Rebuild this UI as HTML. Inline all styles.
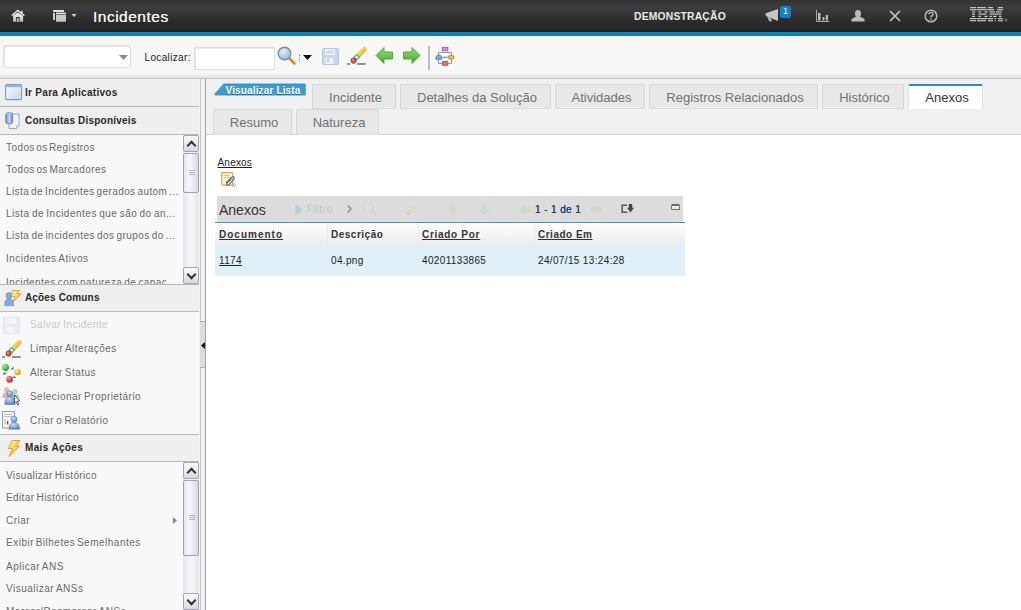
<!DOCTYPE html>
<html><head><meta charset="utf-8">
<style>
*{box-sizing:border-box;margin:0;padding:0}
html,body{width:1021px;height:610px;overflow:hidden;background:#fff;font-family:"Liberation Sans",sans-serif;position:relative}
.abs{position:absolute}
svg{position:absolute;overflow:visible}
#hdr{left:0;top:0;width:1021px;height:32px;background:linear-gradient(#333 0,#3d3d3d 8px,#2d2d2d 20px,#252525 30px,#1c1c1c 32px)}
#blue{left:0;top:32px;width:1021px;height:4px;background:linear-gradient(#0b8cc0,#0a7eae)}
#tb{left:0;top:36px;width:1021px;height:42px;background:linear-gradient(#f7f7f7 0,#f7f7f7 37px,#e2e2e2 42px)}
.t{position:absolute;white-space:nowrap}
#left{left:0;top:78px;width:200px;height:532px;background:#f7f7f7;overflow:hidden}
.sh{position:absolute;left:0;width:200px;background:#efefef;border-top:1px solid #b8b8b8;font-weight:bold;font-size:10px;color:#282828}
.li{position:absolute;left:6px;font-size:10px;color:#686868;white-space:nowrap;letter-spacing:0.5px;word-spacing:-1px;margin-top:-1px}
.ai{position:absolute;left:30px;font-size:10px;color:#686868;white-space:nowrap;letter-spacing:0.45px;word-spacing:-1px;margin-top:-1px}
#main{left:205px;top:78px;width:816px;height:532px;background:#fff;border-left:1px solid #a2a2a2}
.tab{position:absolute;height:25px;background:#e8e8e8;border:1px solid #d6d6d6;border-bottom:1px solid #dcdcdc;border-radius:2px 2px 0 0;font-size:13px;color:#727272;text-align:center;line-height:25px;white-space:nowrap;padding-left:3px}
.sb{position:absolute;width:16px;background:linear-gradient(90deg,#e4e4ec,#f6f6fa 50%,#e4e4ec)}
.sbb{position:absolute;left:0;width:16px;height:17px;border:1px solid #a4a4b4;border-radius:2px;background:linear-gradient(#fafafc,#d8d8e4)}
.up::after,.dn::after{content:'';position:absolute;left:3.5px;width:5px;height:5px;border-left:2px solid #333;border-top:2px solid #333}
.up::after{top:5.5px;transform:rotate(45deg)}
.dn::after{top:2.5px;transform:rotate(-135deg)}
.th{position:absolute;font-size:10px;font-weight:bold;color:#333;white-space:nowrap;letter-spacing:0.5px;margin-top:1px}
.td{position:absolute;font-size:10px;color:#222;white-space:nowrap;letter-spacing:0.35px;margin-top:1px}
</style></head><body>
<!-- HEADER -->
<div id="hdr" class="abs">
  <div class="abs" style="left:378px;top:0;width:267px;height:1px;background:#27353e"></div>
  <svg style="left:11px;top:9px" width="15" height="14" viewBox="0 0 15 14">
    <defs><linearGradient id="hg" x1="0" y1="0" x2="0" y2="1"><stop offset="0" stop-color="#f4f4f4"/><stop offset="1" stop-color="#b8b8b8"/></linearGradient></defs>
    <rect x="9.9" y="1.8" width="1.8" height="3" fill="#d8d8d8"/>
    <path d="M0.9 6.6 L6.8 1.4 L13.3 6.6" stroke="#e4e4e4" stroke-width="1.4" fill="none"/>
    <path d="M2.1 6.8 L6.8 3.6 L12.1 6.8 L12.1 12.7 L2.1 12.7 Z" fill="url(#hg)"/>
    <rect x="5.2" y="8.1" width="3.4" height="4.6" fill="#222"/>
    <rect x="6" y="9.3" width="1.8" height="3.4" fill="#c8c8c8"/>
  </svg>
  <svg style="left:53px;top:10px" width="26" height="13" viewBox="0 0 26 13">
    <rect x="0" y="0" width="11" height="2" fill="#dedede"/>
    <rect x="0" y="3" width="2" height="7" fill="#d0d0d0"/>
    <rect x="3" y="2.6" width="10" height="1.8" fill="#e0e0e0"/>
    <rect x="3" y="5" width="10" height="6.7" fill="#c8c8c8"/>
    <path d="M18.5 4 L23.5 4 L21 7 Z" fill="#d0d0d0"/>
  </svg>
  <div class="t" style="left:93px;top:7.5px;font-size:15.5px;color:#f0f0f0;letter-spacing:0.5px;text-shadow:0 0 0.6px #fff">Incidentes</div>
  <div class="t" style="left:634px;top:10px;font-size:11px;font-weight:bold;color:#e8e8e8;letter-spacing:0.2px;transform:scaleX(0.94);transform-origin:0 0">DEMONSTRAÇÃO</div>
  <svg style="left:765px;top:8px" width="15" height="14" viewBox="0 0 15 14">
    <path d="M0.7 5.3 L13 0.9 L13 13 L0.7 8 Z" fill="#c4c4c4"/>
    <path d="M2.2 8.8 L5.6 10.2 L7.2 13.2 L4.2 13.2 Z" fill="#b8b8b8"/>
  </svg>
  <div class="abs" style="left:780px;top:6px;width:11px;height:12px;background:#1280c4;border-radius:2px;color:#f4f4f4;font-size:9px;text-align:center;line-height:11px">1</div>
  <svg style="left:816px;top:10px" width="14" height="12" viewBox="0 0 14 12">
    <path d="M0.5 0 L0.5 11.5 L13.5 11.5" stroke="#aaa" stroke-width="1" fill="none"/>
    <rect x="2" y="3" width="2.5" height="7.5" fill="#bbb"/>
    <rect x="6.5" y="7" width="2" height="3.5" fill="#bbb"/>
    <rect x="9.8" y="5" width="2.2" height="5.5" fill="#bbb"/>
  </svg>
  <svg style="left:851px;top:10px" width="14" height="12" viewBox="0 0 14 12">
    <ellipse cx="7" cy="3.6" rx="3" ry="3.6" fill="#bbb"/>
    <path d="M5 6.5 L9 6.5 L13.5 9 L13.5 11.5 L0.5 11.5 L0.5 9 Z" fill="#bbb"/>
  </svg>
  <svg style="left:889px;top:10px" width="12" height="12" viewBox="0 0 12 12">
    <path d="M1 1 L11 11 M11 1 L1 11" stroke="#c8c8c8" stroke-width="1.6"/>
  </svg>
  <svg style="left:924px;top:9px" width="14" height="14" viewBox="0 0 14 14">
    <circle cx="7" cy="7" r="5.8" stroke="#b8b8b8" stroke-width="1.5" fill="none"/>
    <path d="M5 5.3 Q5 3.4 7 3.4 Q9 3.4 9 5.2 Q9 6.4 7.5 7 L7 7.3 L7 8.5" stroke="#b8b8b8" stroke-width="1.4" fill="none"/>
    <rect x="6.3" y="9.5" width="1.5" height="1.5" fill="#b8b8b8"/>
  </svg>
  <svg style="left:970px;top:7px" width="38" height="16" viewBox="0 0 38 16"><g fill="#c4c4c4"><rect x="0.0" y="0.0" width="6.0" height="1.2"/><rect x="7.0" y="0.0" width="9.0" height="1.2"/><rect x="18.0" y="0.0" width="5.0" height="1.2"/><rect x="28.0" y="0.0" width="5.0" height="1.2"/><rect x="0.0" y="2.1" width="6.5" height="1.2"/><rect x="7.0" y="2.1" width="10.5" height="1.2"/><rect x="18.0" y="2.1" width="6.0" height="1.2"/><rect x="27.0" y="2.1" width="6.0" height="1.2"/><rect x="2.0" y="4.3" width="3.0" height="1.2"/><rect x="8.5" y="4.3" width="2.5" height="1.2"/><rect x="14.5" y="4.3" width="3.0" height="1.2"/><rect x="19.5" y="4.3" width="5.5" height="1.2"/><rect x="26.0" y="4.3" width="5.5" height="1.2"/><rect x="2.0" y="6.5" width="3.0" height="1.2"/><rect x="8.5" y="6.5" width="8.0" height="1.2"/><rect x="19.5" y="6.5" width="12.0" height="1.2"/><rect x="2.0" y="8.8" width="3.0" height="1.2"/><rect x="8.5" y="8.8" width="2.5" height="1.2"/><rect x="14.5" y="8.8" width="3.0" height="1.2"/><rect x="19.5" y="8.8" width="2.5" height="1.2"/><rect x="23.0" y="8.8" width="3.5" height="1.2"/><rect x="29.0" y="8.8" width="2.5" height="1.2"/><rect x="0.0" y="11.0" width="6.5" height="1.2"/><rect x="7.0" y="11.0" width="10.5" height="1.2"/><rect x="18.0" y="11.0" width="5.0" height="1.2"/><rect x="24.5" y="11.0" width="1.5" height="1.2"/><rect x="28.0" y="11.0" width="5.0" height="1.2"/><rect x="0.0" y="13.1" width="6.0" height="1.2"/><rect x="7.0" y="13.1" width="9.0" height="1.2"/><rect x="18.0" y="13.1" width="5.0" height="1.2"/><rect x="24.8" y="13.1" width="1.0" height="1.2"/><rect x="28.0" y="13.1" width="5.0" height="1.2"/><circle cx="36" cy="13" r="1" fill="none" stroke="#aaa" stroke-width="0.6"/></g></svg>
</div>
<div id="blue" class="abs"></div>
<!-- TOOLBAR -->
<div id="tb" class="abs">
  <div class="abs" style="left:3px;top:9px;width:128px;height:23px;background:#fff;border:1px solid #dcdcdc;border-radius:3px;box-shadow:inset 1px 1px 1px #e6e6e6"></div>
  <svg style="left:119px;top:19px" width="9" height="5" viewBox="0 0 9 5"><path d="M0 0 L9 0 L4.5 5 Z" fill="#888"/></svg>
  <div class="t" style="left:144.5px;top:16px;font-size:10px;color:#222;letter-spacing:0.35px">Localizar:</div>
  <div class="abs" style="left:194px;top:11px;width:81px;height:23px;background:#fff;border:1px solid #dedede;box-shadow:inset 1px 1px 1px #e6e6e6"></div>
  <svg style="left:277px;top:10px" width="20" height="19" viewBox="0 0 20 19">
    <defs><radialGradient id="lg" cx="0.4" cy="0.35" r="0.7"><stop offset="0" stop-color="#e6f2fb"/><stop offset="1" stop-color="#8ab4dc"/></radialGradient></defs>
    <path d="M12 12 L17.5 17.5" stroke="#d98a1a" stroke-width="2.6" stroke-linecap="round"/>
    <circle cx="7.5" cy="7.5" r="6.3" fill="url(#lg)" stroke="#8c8c8c" stroke-width="1.4"/>
  </svg>
  <div class="abs" style="left:299px;top:18px;width:1px;height:8px;border-left:1px dotted #99a"></div>
  <svg style="left:303px;top:19px" width="9" height="5" viewBox="0 0 9 5"><path d="M0 0 L9 0 L4.5 5 Z" fill="#111"/></svg>
  <svg style="left:322px;top:12px" width="17" height="17" viewBox="0 0 17 17">
    <rect x="0.5" y="0.5" width="16" height="16" rx="1" fill="#c9d6ea" stroke="#b8c6dc"/>
    <rect x="3" y="1" width="10" height="6" fill="#eef2f8"/>
    <rect x="4.5" y="2.5" width="7" height="0.8" fill="#b8c4d8"/>
    <rect x="4.5" y="4.3" width="7" height="0.8" fill="#b8c4d8"/>
    <rect x="3.5" y="10" width="8" height="6" fill="#eef2f8"/>
    <rect x="5" y="11" width="2" height="3" fill="#b8c4d8"/>
  </svg>
  <svg style="left:346px;top:10px" width="21" height="19" viewBox="0 0 21 19">
    <defs><linearGradient id="ery" x1="0" y1="0" x2="1" y2="1"><stop offset="0" stop-color="#fff080"/><stop offset="1" stop-color="#d8a820"/></linearGradient></defs>
    <path d="M12 9.8 L18.2 3.2" stroke="url(#ery)" stroke-width="5" stroke-linecap="round"/>
    <path d="M9.2 12.8 L12.3 9.5" stroke="#4aa8a0" stroke-width="5"/>
    <path d="M10 12 L11.5 10.4" stroke="#d8f0f0" stroke-width="3"/>
    <circle cx="7.6" cy="14.6" r="2.8" fill="#b85838" stroke="#8a3a20" stroke-width="0.5"/>
    <circle cx="7" cy="14" r="1.2" fill="#e08870"/>
    <rect x="1" y="17.3" width="3" height="1.4" fill="#5a64a8"/>
    <rect x="11" y="17.3" width="8.7" height="1.4" fill="#5a64a8"/>
  </svg>
  <svg style="left:375px;top:10px" width="19" height="19" viewBox="0 0 19 19">
    <defs><linearGradient id="ga" x1="0" y1="0" x2="0" y2="1"><stop offset="0" stop-color="#9de07a"/><stop offset="1" stop-color="#3ea82a"/></linearGradient></defs>
    <path d="M1 9.5 L9 1.5 L9 6 L17.5 6 L17.5 13 L9 13 L9 17.5 Z" fill="url(#ga)" stroke="#3a9a2a" stroke-width="0.8"/>
  </svg>
  <svg style="left:402px;top:10px" width="19" height="19" viewBox="0 0 19 19">
    <path d="M18 9.5 L10 1.5 L10 6 L1.5 6 L1.5 13 L10 13 L10 17.5 Z" fill="url(#ga)" stroke="#3a9a2a" stroke-width="0.8"/>
  </svg>
  <div class="abs" style="left:428px;top:10px;width:2px;height:24px;background:#bdbdb4"></div>
  <svg style="left:435px;top:10px" width="21" height="21" viewBox="0 0 21 21">
    <path d="M3.5 6.5 L16.5 6.5 L16.5 17.5 L3.5 17.5 Z M6 11.3 L14 11.3" stroke="#8a8a8a" stroke-width="0.9" fill="none"/>
    <rect x="7.3" y="1.3" width="5.5" height="3.6" fill="#cc8ef0" stroke="#8e52c0" stroke-width="0.8"/>
    <path d="M0.8 13.3 Q0.8 9 3.8 9 Q6.8 9 6.8 13.3 Z" fill="#7eaee8" stroke="#4a70b0" stroke-width="0.8"/>
    <ellipse cx="16.2" cy="11.3" rx="3" ry="1.9" fill="#f4c040" stroke="#9a7a30" stroke-width="0.8"/>
    <rect x="7.3" y="15.6" width="5.5" height="3.7" fill="#e87070" stroke="#b84848" stroke-width="0.8"/>
    <circle cx="10" cy="11.3" r="0.9" fill="#999"/>
  </svg>
</div>
<div class="abs" style="left:0;top:78px;width:1021px;height:1px;background:#c2c2c2;z-index:5"></div>

<!-- LEFT PANEL -->
<div id="left" class="abs">
  <!-- Ir Para Aplicativos -->
  <div class="sh" style="top:0;height:28px;border-top:none">
    <svg style="left:5px;top:6px" width="18" height="17" viewBox="0 0 18 17">
      <defs><linearGradient id="wg" x1="0" y1="0" x2="1" y2="1"><stop offset="0" stop-color="#fafcff"/><stop offset="1" stop-color="#c4d6ee"/></linearGradient></defs>
      <rect x="0.6" y="0.6" width="16" height="15" rx="1" fill="url(#wg)" stroke="#7a9ccc" stroke-width="1.1"/>
      <rect x="1" y="1" width="15.2" height="2.2" fill="#94b4e0"/>
    </svg>
    <span class="t" style="left:25px;top:9px;letter-spacing:0.3px">Ir Para Aplicativos</span>
  </div>
  <!-- Consultas -->
  <div class="sh" style="top:28px;height:28px">
    <svg style="left:5px;top:5px" width="18" height="18" viewBox="0 0 18 18">
      <defs><linearGradient id="cyl" x1="0" y1="0" x2="1" y2="0"><stop offset="0" stop-color="#6a90c0"/><stop offset="0.5" stop-color="#c8dcec"/><stop offset="1" stop-color="#6a8cb8"/></linearGradient></defs>
      <path d="M4 2 L14 2 L14 14 L11.5 16.5 L4 16.5 Z" fill="#eef2fa" stroke="#8c98b4" stroke-width="0.8"/>
      <path d="M11.5 16.5 L11.5 14 L14 14" fill="#fff" stroke="#8c98b4" stroke-width="0.6"/>
      <rect x="0.8" y="0.8" width="6.8" height="11" rx="2" fill="url(#cyl)" stroke="#5a78a8" stroke-width="0.8"/>
      <ellipse cx="4.2" cy="2.2" rx="2.8" ry="1.2" fill="#a8c4e0"/>
    </svg>
    <span class="t" style="left:25px;top:8px;letter-spacing:0.2px">Consultas Disponíveis</span>
  </div>
  <div class="abs" style="left:0;top:56px;width:200px;height:150px;background:#f8f8f8;border-top:1px solid #b8b8b8;overflow:hidden">
    <div class="li" style="top:8px;word-spacing:-1.8px;letter-spacing:0.42px">Todos os Registros</div>
    <div class="li" style="top:30px;word-spacing:-1.6px;letter-spacing:0.42px">Todos os Marcadores</div>
    <div class="li" style="top:52px;word-spacing:-1.2px;letter-spacing:0.4px">Lista de Incidentes gerados autom ...</div>
    <div class="li" style="top:74px">Lista de Incidentes que são do an...</div>
    <div class="li" style="top:96px;word-spacing:-1.2px;letter-spacing:0.45px">Lista de incidentes dos grupos do ...</div>
    <div class="li" style="top:119px">Incidentes Ativos</div>
    <div class="li" style="top:143px;letter-spacing:0.4px">Incidentes com natureza de capac</div>
    <div class="sb" style="left:183px;top:0;height:150px">
      <div class="sbb up" style="top:0px"></div>
      <div class="abs" style="left:0;top:18px;width:16px;height:40px;border:1px solid #a0a0b0;border-radius:2px;background:linear-gradient(90deg,#e6e6ee,#f6f6fa 40%,#d8d8e2)"><div class="abs" style="left:4.5px;top:16px;width:6px;height:6px;background:repeating-linear-gradient(#b4b4c4 0,#b4b4c4 1px,transparent 1px,transparent 2px)"></div></div>
      <div class="sbb dn" style="top:132px"></div>
    </div>
  </div>
  <!-- Acoes Comuns -->
  <div class="sh" style="top:206px;height:28px;border-bottom:1px solid #b8b8b8">
    <svg style="left:4px;top:5px" width="18" height="17" viewBox="0 0 18 17">
      <defs><linearGradient id="bolt2" x1="0" y1="0" x2="1" y2="1"><stop offset="0" stop-color="#fff8b0"/><stop offset="1" stop-color="#f0b810"/></linearGradient></defs>
      <circle cx="5" cy="5.6" r="3" fill="#88a8e0" stroke="#5a7cc0" stroke-width="0.6"/>
      <path d="M0.6 15.6 Q0.6 8.6 5 8.6 Q9.6 8.6 9.6 15.6 Z" fill="#88a8e0" stroke="#5a7cc0" stroke-width="0.6"/>
      <path d="M8.3 0.6 L15.3 0.6 L13 3.8 L17.3 3.8 L9 12 L11 6.6 L7.5 6.6 Z" fill="url(#bolt2)" stroke="#c88a30" stroke-width="0.7"/>
    </svg>
    <span class="t" style="left:25px;top:6.8px;letter-spacing:0.15px">Ações Comuns</span>
  </div>
  <div class="abs" style="left:0;top:234px;width:200px;height:122px;background:#f8f8f8">
    <svg style="left:3px;top:5px" width="17" height="17" viewBox="0 0 17 17" opacity="0.35">
      <rect x="0.5" y="0.5" width="16" height="16" rx="1" fill="#c9d6ea" stroke="#b8c6dc"/>
      <rect x="3" y="1" width="10" height="6" fill="#eef2f8"/>
      <rect x="3.5" y="10" width="8" height="6" fill="#eef2f8"/>
    </svg>
    <div class="ai" style="top:8px;color:#c8c8c8">Salvar Incidente</div>
    <svg style="left:1px;top:27px" width="21" height="19" viewBox="0 0 21 19">
    <defs><linearGradient id="ery2" x1="0" y1="0" x2="1" y2="1"><stop offset="0" stop-color="#fff080"/><stop offset="1" stop-color="#d8a820"/></linearGradient></defs>
    <path d="M12 9.8 L18.2 3.2" stroke="url(#ery2)" stroke-width="5" stroke-linecap="round"/>
    <path d="M9.2 12.8 L12.3 9.5" stroke="#4aa8a0" stroke-width="5"/>
    <path d="M10 12 L11.5 10.4" stroke="#d8f0f0" stroke-width="3"/>
    <circle cx="7.6" cy="14.6" r="2.8" fill="#b85838" stroke="#8a3a20" stroke-width="0.5"/>
    <circle cx="7" cy="14" r="1.2" fill="#e08870"/>
    <rect x="1" y="17.3" width="3" height="1.4" fill="#5a64a8"/>
    <rect x="11" y="17.3" width="8.7" height="1.4" fill="#5a64a8"/>
  </svg>
    <div class="ai" style="top:32px">Limpar Alterações</div>
    <svg style="left:2px;top:51px" width="20" height="20" viewBox="0 0 20 20">
      <defs>
        <radialGradient id="bg1" cx="0.35" cy="0.3" r="0.7"><stop offset="0" stop-color="#a8f090"/><stop offset="1" stop-color="#2a9a20"/></radialGradient>
        <radialGradient id="bg2" cx="0.35" cy="0.3" r="0.7"><stop offset="0" stop-color="#fff090"/><stop offset="1" stop-color="#d8a000"/></radialGradient>
        <radialGradient id="bg3" cx="0.35" cy="0.3" r="0.7"><stop offset="0" stop-color="#ff9090"/><stop offset="1" stop-color="#c02828"/></radialGradient>
      </defs>
      <circle cx="3.6" cy="4.5" r="3.4" fill="url(#bg1)"/>
      <circle cx="15.5" cy="9" r="3.3" fill="url(#bg2)"/>
      <circle cx="7.6" cy="16.4" r="3.3" fill="url(#bg3)"/>
      <path d="M8.5 6.5 L11.5 3.5 L11.5 6.5 Z M1.5 9.5 L5 9.5 L1.5 12.5 Z M11.5 12.5 L14.5 15 L11.5 15 Z" fill="#3a68b0"/>
    </svg>
    <div class="ai" style="top:56px">Alterar Status</div>
    <svg style="left:2px;top:75px" width="20" height="20" viewBox="0 0 20 20">
      <defs><radialGradient id="pb" cx="0.4" cy="0.3" r="0.8"><stop offset="0" stop-color="#c8e0fa"/><stop offset="1" stop-color="#4a7cc0"/></radialGradient></defs>
      <circle cx="4.6" cy="2.8" r="2.6" fill="#e8b8b8"/>
      <path d="M0.3 11 Q0.3 5.2 4.6 5.2 Q8.8 5.2 8.8 11 Z" fill="#e4b0b0"/>
      <circle cx="13" cy="4.6" r="2.6" fill="#b0d4a8"/>
      <path d="M8.8 13 Q8.8 7 13 7 Q17.4 7 17.4 13 Z" fill="#a8cca0"/>
      <circle cx="7.8" cy="6.6" r="2.9" fill="url(#pb)" stroke="#4a70a8" stroke-width="0.5"/>
      <path d="M2.8 17.5 Q2.8 9.6 7.8 9.6 Q13.2 9.6 13.2 17.5 Z" fill="url(#pb)" stroke="#4a70a8" stroke-width="0.5"/>
      <path d="M12.4 8 L12.4 16 L14 14.4 L15.8 18.2 L17 17.6 L15.3 14 L17.6 14 Z" fill="#fff" stroke="#1a2a5a" stroke-width="0.7"/>
    </svg>
    <div class="ai" style="top:80px">Selecionar Proprietário</div>
    <svg style="left:2px;top:99px" width="20" height="20" viewBox="0 0 20 20">
      <rect x="0.6" y="0.6" width="11.8" height="16.4" fill="#f4f6fa" stroke="#8090b0" stroke-width="0.9"/>
      <rect x="2.5" y="3" width="8" height="0.8" fill="#a8b0c8"/>
      <rect x="2.5" y="5" width="8" height="0.8" fill="#a8b0c8"/>
      <rect x="2.5" y="8" width="1.2" height="5.5" fill="#f0c020"/>
      <rect x="5" y="10" width="1.3" height="3.5" fill="#e02020"/>
      <circle cx="12" cy="8.3" r="3" fill="url(#pb)" stroke="#4a70a8" stroke-width="0.5"/>
      <path d="M7 18.2 Q7 11.5 12 11.5 Q17.6 11.5 17.6 18.2 Z" fill="url(#pb)" stroke="#4a70a8" stroke-width="0.5"/>
    </svg>
    <div class="ai" style="top:104px">Criar o Relatório</div>
  </div>
  <!-- Mais Acoes -->
  <div class="sh" style="top:356px;height:28px;border-bottom:1px solid #b8b8b8">
    <svg style="left:7px;top:5px" width="14" height="17" viewBox="0 0 14 17">
      <defs><linearGradient id="bolt" x1="0" y1="0" x2="1" y2="1"><stop offset="0" stop-color="#fff2a0"/><stop offset="1" stop-color="#f0b818"/></linearGradient></defs>
      <path d="M5 0.5 L13 0.5 L8.5 6 L12.5 6 L2 16.5 L5.5 8.5 L1.5 8.5 Z" fill="url(#bolt)" stroke="#d09010" stroke-width="0.8"/>
    </svg>
    <span class="t" style="left:25px;top:7px;letter-spacing:0.35px">Mais Ações</span>
  </div>
  <div class="abs" style="left:0;top:384px;width:200px;height:148px;background:#f8f8f8;overflow:hidden">
    <div class="li" style="top:9px;letter-spacing:0.35px">Visualizar Histórico</div>
    <div class="li" style="top:31px;letter-spacing:0.38px">Editar Histórico</div>
    <div class="li" style="top:53.5px">Criar</div>
    <svg style="left:173px;top:55px" width="4" height="7" viewBox="0 0 4 7"><path d="M0 0 L4 3.5 L0 7 Z" fill="#888"/></svg>
    <div class="li" style="top:76px;word-spacing:-1.6px">Exibir Bilhetes Semelhantes</div>
    <div class="li" style="top:99.5px">Aplicar ANS</div>
    <div class="li" style="top:121.5px">Visualizar ANSs</div>
    <div class="li" style="top:145px">Marcar/Desmarcar ANSs</div>
    <div class="sb" style="left:183px;top:0;height:148px">
      <div class="sbb up" style="top:0px"></div>
      <div class="abs" style="left:0;top:18px;width:16px;height:76px;border:1px solid #a0a0b0;border-radius:2px;background:linear-gradient(90deg,#e6e6ee,#f6f6fa 40%,#d8d8e2)"><div class="abs" style="left:4.5px;top:34px;width:6px;height:6px;background:repeating-linear-gradient(#b4b4c4 0,#b4b4c4 1px,transparent 1px,transparent 2px)"></div></div>
      <div class="sbb dn" style="top:131px"></div>
    </div>
  </div>
</div>

<!-- SPLITTER -->
<div class="abs" style="left:199px;top:78px;width:6px;height:532px;background:#f2f2f2;border-left:1px solid #f4f4f4;box-shadow:inset 1px 0 0 #c8c8c8"></div>
<div class="abs" style="left:200px;top:321px;width:5px;height:47px;background:#dcdcdc;border-top:1px solid #b0b0b0;border-bottom:1px solid #b0b0b0"></div>
<svg style="left:201px;top:342px" width="4" height="7" viewBox="0 0 4 7"><path d="M4 0 L0 3.5 L4 7 Z" fill="#111"/></svg>

<!-- MAIN -->
<div id="main" class="abs">
  <!-- tab strip -->
  <div class="abs" style="left:0;top:0;width:816px;height:57px;background:#f0f0f0;border-bottom:1px solid #d0d0d0"></div>
  <svg style="left:8px;top:5px" width="93" height="13" viewBox="0 0 93 13">
    <path d="M9.5 0.8 L90.5 0.8 Q91.8 0.8 91.8 2 L91.8 12.5 L1.2 12.5 L0.2 11 Z" fill="#3c9ccb"/>
    <path d="M9.5 0.8 L90.5 0.8 Q91.8 0.8 91.8 2 L91.8 1.6 L8.7 1.6 Z" fill="#2e84b4"/>
  </svg>
  <div class="t" style="left:19.5px;top:7px;font-size:10px;font-weight:bold;color:#fff;letter-spacing:0.15px;text-shadow:0 0.5px 0.5px rgba(0,40,80,0.5)">Visualizar Lista</div>
  <div class="tab" style="left:106px;top:6px;width:84px">Incidente</div>
  <div class="tab" style="left:194px;top:6px;width:151px">Detalhes da Solução</div>
  <div class="tab" style="left:349px;top:6px;width:90px">Atividades</div>
  <div class="tab" style="left:443px;top:6px;width:169px">Registros Relacionados</div>
  <div class="tab" style="left:616px;top:6px;width:82px">Histórico</div>
  <div class="tab" style="left:702px;top:6px;width:75px;background:#fff;border:1px solid #e0e0e0;border-top:2px solid #2a8ec4;border-bottom:none;color:#333;line-height:23px">Anexos</div>
  <div class="tab" style="left:7px;top:31px;width:79px;height:26px">Resumo</div>
  <div class="tab" style="left:90px;top:31px;width:83px;height:26px">Natureza</div>

  <!-- content -->
  <div class="t" style="left:11.5px;top:79px;font-size:10px;color:#222;text-decoration:underline;letter-spacing:0.2px">Anexos</div>
  <svg style="left:15px;top:94px" width="15" height="15" viewBox="0 0 15 15">
    <rect x="0.7" y="0.7" width="11" height="12.5" rx="1" fill="#fff4d8" stroke="#e0a838" stroke-width="1.2"/>
    <rect x="2.5" y="3" width="6" height="0.8" fill="#c8b890"/>
    <rect x="2.5" y="5" width="6" height="0.8" fill="#c8b890"/>
    <path d="M5 11 L10.5 5.5 Q12 4 13 5.2 Q14 6.4 12.5 7.8 L7.5 12.8 Q6.5 13.8 5.8 13 Q5 12.2 6 11.2 L10.5 6.8" stroke="#5a6a9a" stroke-width="1.1" fill="none"/>
    <path d="M11 11 L13 13 L11 15 M13 11 L15 13 L13 15" stroke="#9a9ab0" stroke-width="0.7" fill="none"/>
  </svg>

  <!-- table -->
  <div class="abs" style="left:11px;top:118px;width:466px;height:26px;background:#dcdcdc"></div>
  <div class="t" style="left:13px;top:124px;font-size:14px;color:#333">Anexos</div>
  <svg style="left:89px;top:125px" width="8" height="13" viewBox="0 0 8 13"><path d="M0.5 0.5 L7.5 6.5 L0.5 12.5 Z" fill="#b8cce0"/></svg>
  <div class="t" style="left:101px;top:126px;font-size:10px;color:#c6c6c6;letter-spacing:0.6px">Filtro</div>
  <svg style="left:141px;top:127px" width="5" height="8" viewBox="0 0 5 8"><path d="M0.8 0.5 L4 4 L0.8 7.5" stroke="#8a8a8a" stroke-width="1.4" fill="none"/></svg>
  <svg style="left:157px;top:124px" width="14" height="14" viewBox="0 0 14 14" opacity="0.18">
    <circle cx="5.5" cy="5.5" r="4.5" fill="#e0eef8" stroke="#aaa"/>
    <path d="M9 9 L13 13" stroke="#d9a040" stroke-width="2"/>
  </svg>
  <svg style="left:198px;top:125px" width="14" height="13" viewBox="0 0 21 19" opacity="0.14">
    <path d="M6 13 L16 2.5 L19.5 5.5 L9.5 16 Z" fill="#e8c83a"/>
    <path d="M3.5 15.5 Q3.5 12 6 12.5 L9.5 15.5 Q8 18 5 17.5 Z" fill="#b8502a"/>
  </svg>
  <svg style="left:240px;top:124px" width="13" height="14" viewBox="0 0 13 14" opacity="0.35">
    <path d="M6.5 0.5 L12.5 6.5 L9.5 6.5 L9.5 13.5 L3.5 13.5 L3.5 6.5 L0.5 6.5 Z" fill="#b8dcb0"/>
  </svg>
  <svg style="left:272px;top:124px" width="13" height="14" viewBox="0 0 13 14" opacity="0.35">
    <path d="M6.5 13.5 L12.5 7.5 L9.5 7.5 L9.5 0.5 L3.5 0.5 L3.5 7.5 L0.5 7.5 Z" fill="#b8dcb0"/>
  </svg>
  <svg style="left:313px;top:125px" width="14" height="13" viewBox="0 0 14 13" opacity="0.35">
    <path d="M0.5 6.5 L6.5 0.5 L6.5 3.5 L13.5 3.5 L13.5 9.5 L6.5 9.5 L6.5 12.5 Z" fill="#b8dcb0"/>
  </svg>
  <div class="t" style="left:329px;top:126px;font-size:10px;color:#1a4374;letter-spacing:0.3px;word-spacing:0.2px;text-shadow:0 0 0.3px #1a4374">1 - 1 de 1</div>
  <svg style="left:384px;top:125px" width="14" height="13" viewBox="0 0 14 13" opacity="0.35">
    <path d="M13.5 6.5 L7.5 0.5 L7.5 3.5 L0.5 3.5 L0.5 9.5 L7.5 9.5 L7.5 12.5 Z" fill="#b8dcb0"/>
  </svg>
  <svg style="left:415px;top:126px" width="13" height="10" viewBox="0 0 13 10">
    <path d="M6 1.2 L1.2 1.2 L1.2 8.3 L6.5 8.3" stroke="#5a5a5a" stroke-width="1.6" fill="none"/>
    <path d="M7.8 0 L11.2 0 L11.2 3.8 L13 3.8 L9.5 8.6 L6 3.8 L7.8 3.8 Z" fill="#444"/>
  </svg>
  <div class="abs" style="left:464.5px;top:126px;width:9.5px;height:6px;border:1px solid #707070;border-top:2.5px solid #6a6a6a;border-radius:1.5px;background:#ececec"></div>
  <div class="abs" style="left:9px;top:144px;width:470px;height:1px;background:#3a96c8"></div>
  <div class="abs" style="left:9px;top:145px;width:470px;height:22px;background:linear-gradient(#fefefe,#ececec)"></div>
  <div class="abs" style="left:9px;top:167px;width:470px;height:31px;background:#dff0f8"></div>
  <div class="abs" style="left:121px;top:145px;width:1px;height:53px;background:#eaeaea"></div>
  <div class="abs" style="left:212px;top:145px;width:1px;height:53px;background:#eaeaea"></div>
  <div class="abs" style="left:328px;top:145px;width:1px;height:53px;background:#eaeaea"></div>
  <div class="th" style="left:13px;top:150px;text-decoration:underline;letter-spacing:1px">Documento</div>
  <div class="th" style="left:125px;top:150px">Descrição</div>
  <div class="th" style="left:216px;top:150px;text-decoration:underline;letter-spacing:0.7px">Criado Por</div>
  <div class="th" style="left:332px;top:150px;text-decoration:underline">Criado Em</div>
  <div class="td" style="left:13px;top:176px;text-decoration:underline">1174</div>
  <div class="td" style="left:125px;top:176px">04.png</div>
  <div class="td" style="left:216px;top:176px">40201133865</div>
  <div class="td" style="left:332px;top:176px">24/07/15 13:24:28</div>
</div>
</body></html>
